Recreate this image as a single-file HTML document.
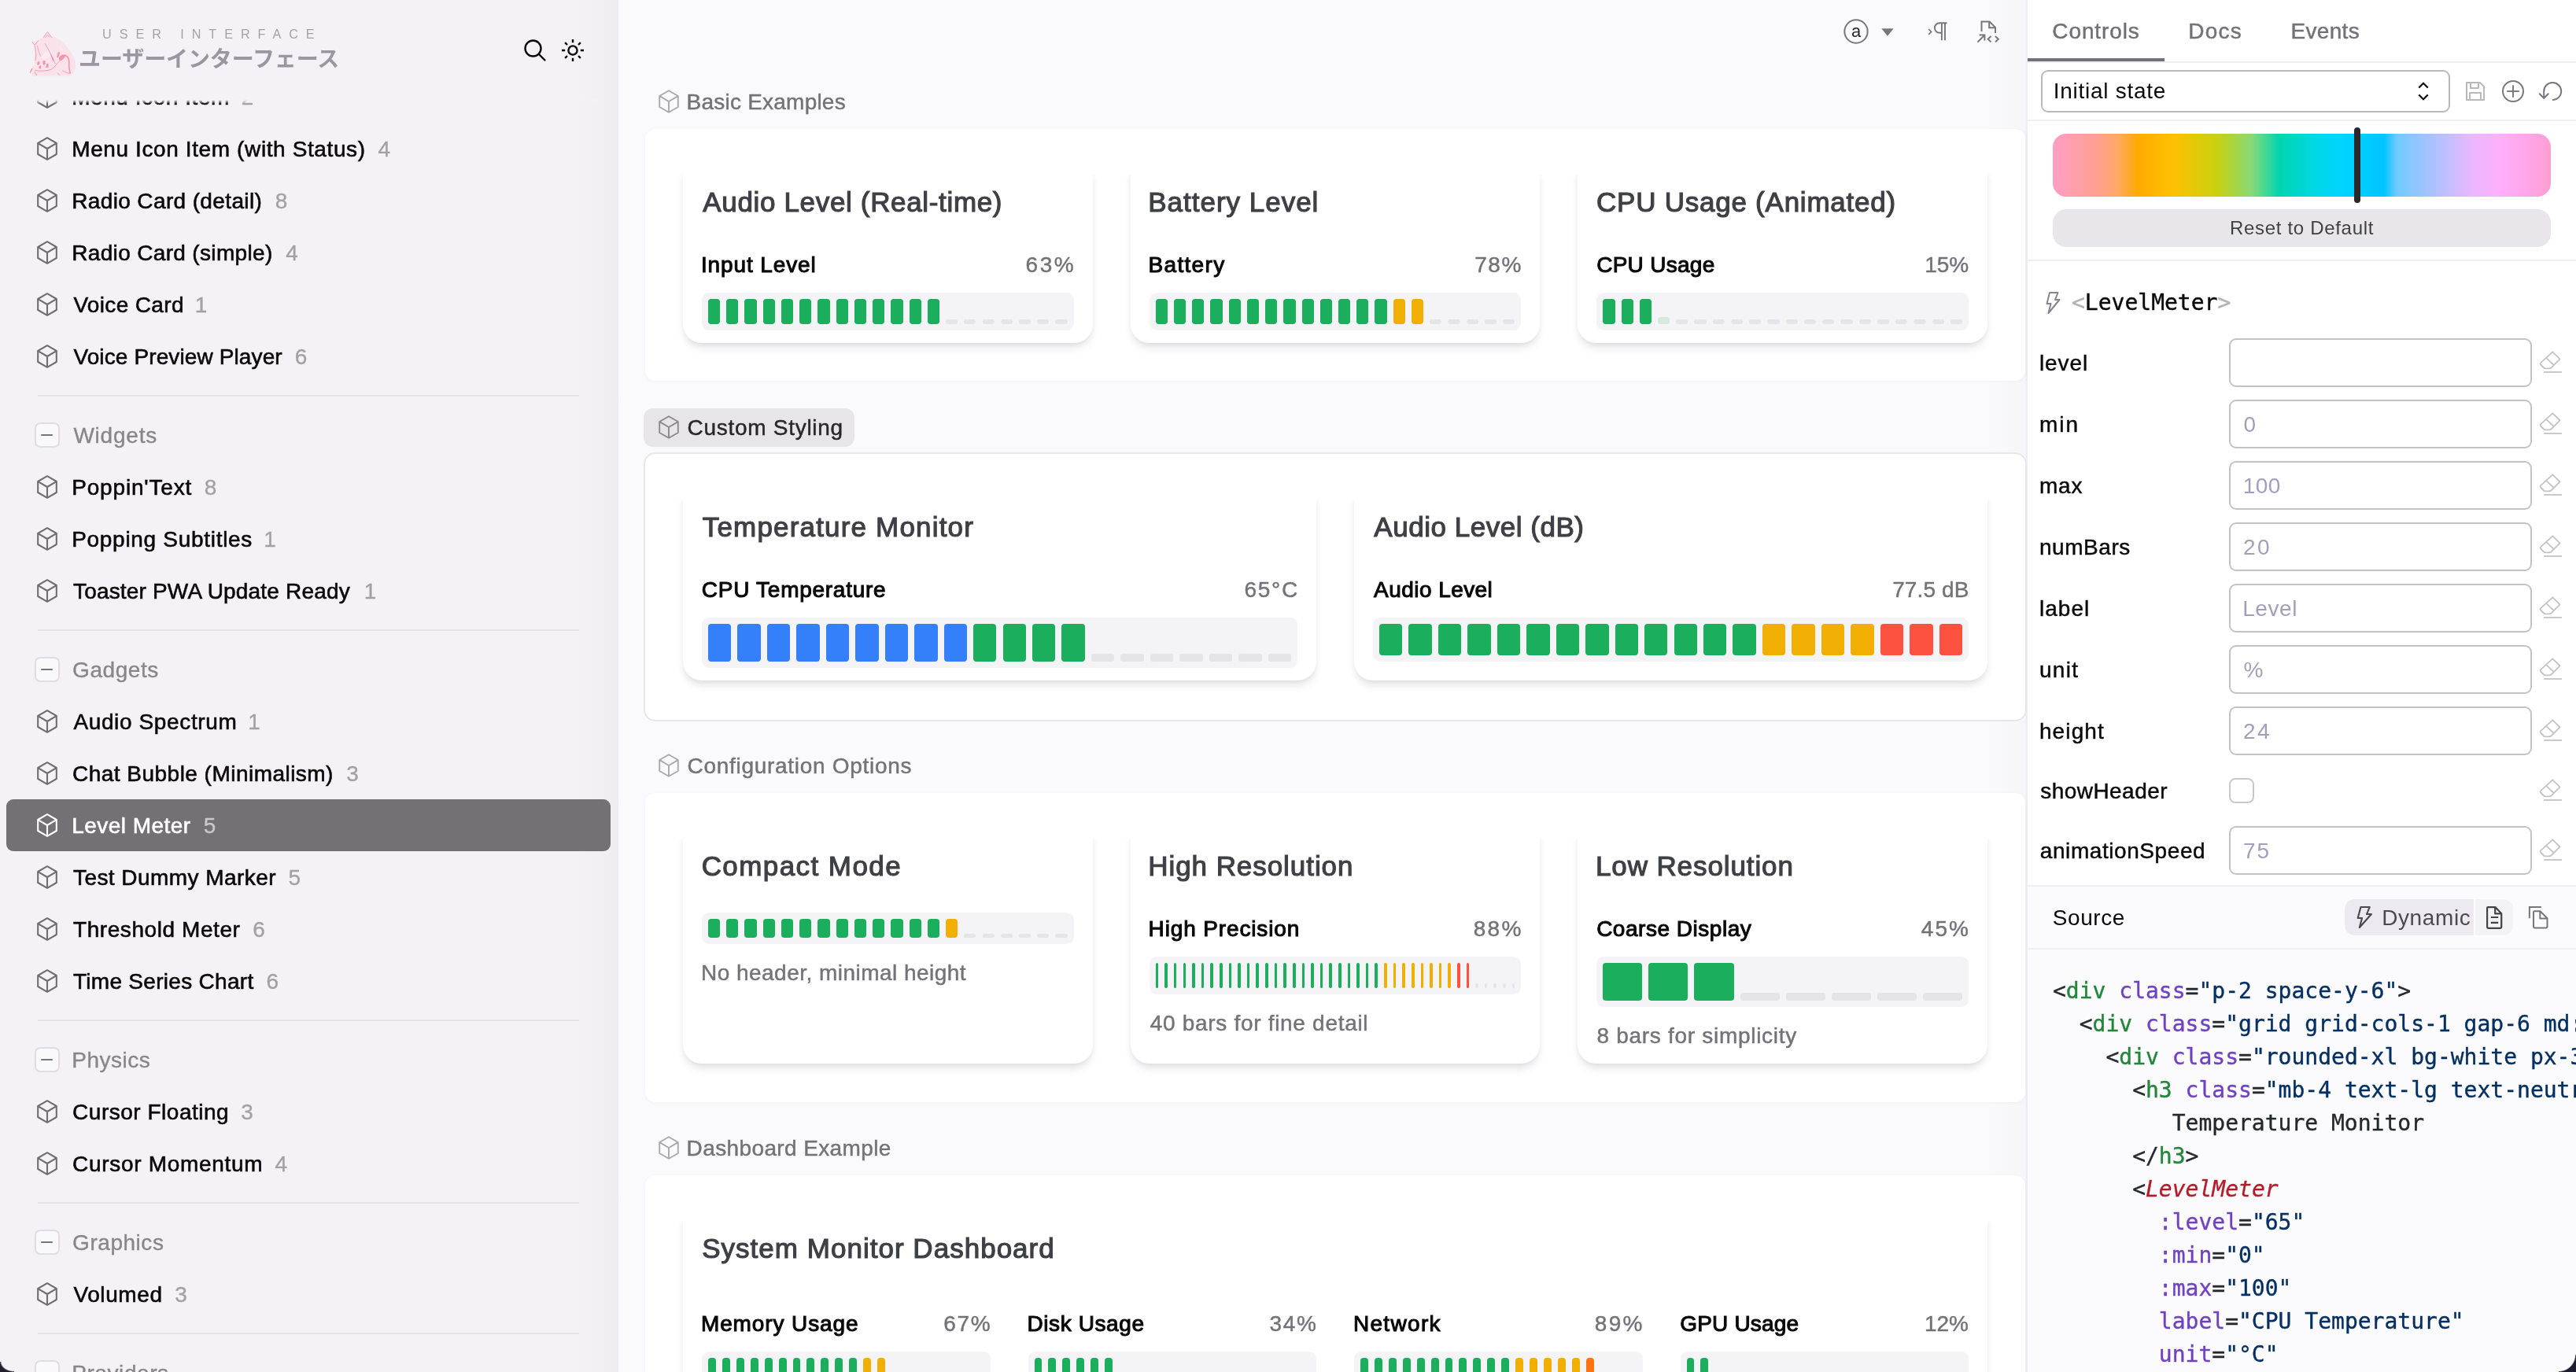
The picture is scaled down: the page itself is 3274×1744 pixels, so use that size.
<!DOCTYPE html>
<html lang="en"><head><meta charset="utf-8"><title>Level Meter</title>
<style>
*{box-sizing:border-box;margin:0;padding:0}
html,body{width:3274px;height:1744px;overflow:hidden;background:#faf9fb}
body{position:relative;font-family:"Liberation Sans","Noto Sans CJK JP",sans-serif;color:#0a0a0a;font-size:28px}
.ab{position:absolute}
svg{display:block;overflow:visible}
#side{position:absolute;left:0;top:0;width:786px;height:1744px;background:linear-gradient(90deg,#f4f2f7 0,#f4f2f7 736px,#f1eff4 770px,#efedf2 786px);overflow:hidden}
#main{position:absolute;left:786px;top:0;width:1791px;height:1744px;background:linear-gradient(90deg,#faf9fb 0,#faf9fb 1740px,#f6f5f8 1788px,#efedf1 1789px,#efedf1 1791px);overflow:hidden}
#panel{position:absolute;left:2577px;top:0;width:697px;height:1744px;background:#fff;overflow:hidden}
#side,#main,#panel{will-change:transform}
.it{position:absolute;left:8px;width:768px;height:66px;border-radius:9px;white-space:nowrap}
.it span{position:absolute;left:85.400px;top:1px;line-height:66px;font-size:28px;color:#0a0a0a;-webkit-text-stroke:.6px #0a0a0a}
.it b{position:absolute;top:1px;line-height:66px;font-size:28px;font-weight:400;color:#a1a1a6;-webkit-text-stroke:.35px #a1a1a6}
.it.sel{background:#737076}
.it.sel span{color:#fff;-webkit-text-stroke:.6px #fff}
.it.sel b{color:#c9c8cc;-webkit-text-stroke:.35px #c9c8cc}
.gh{position:absolute;left:8px;width:768px;height:66px;white-space:nowrap}
.gh span{position:absolute;left:85.400px;top:1px;line-height:66px;font-size:28px;color:#87868c;-webkit-text-stroke:.35px #87868c}
.gh u{position:absolute;left:35.500px;top:17px;width:32px;height:32px;border:2px solid #dfdde3;border-radius:7px;background:#f9f8fb}
.gh u:after{content:"";position:absolute;left:6.5px;top:13px;width:15px;height:2.2px;background:#77767c;border-radius:1px}
.sep{position:absolute;left:48px;width:688px;height:2px;background:#e6e4ea}
.sl{position:absolute;height:49px;border-radius:12px;white-space:nowrap;font-size:28px;line-height:49px;color:#737279;-webkit-text-stroke:.45px #737279}
.sl.on{background:#e7e5e9;color:#27272a;-webkit-text-stroke:.45px #27272a}
.sl span{position:absolute;left:56.800px;top:0}
.pn{position:absolute;left:34px;width:1754px;background:#fff;border-radius:13px;box-shadow:0 1px 5px rgba(40,30,60,.035)}
.pn.bd{box-shadow:0 0 0 2px #e8e6eb}
.cd{position:absolute;background:#fff;border-radius:0 0 24px 24px;clip-path:inset(10px -40px -40px -40px);box-shadow:0 8px 12px -2px rgba(30,20,50,.10),0 4px 8px -4px rgba(30,20,50,.10)}
.cd h3{position:absolute;left:25.300px;top:17px;font-size:35px;line-height:56px;font-weight:400;color:#3f3f46;white-space:nowrap;-webkit-text-stroke:1.15px #3f3f46}
.lb{position:absolute;font-size:28px;line-height:40px;color:#0a0a0a;white-space:nowrap;-webkit-text-stroke:1.05px #0a0a0a}
.vl{position:absolute;font-size:28px;line-height:40px;color:#737279;white-space:nowrap;text-align:right;-webkit-text-stroke:.45px #737279}
.nt{position:absolute;font-size:28px;line-height:40px;color:#737279;white-space:nowrap;-webkit-text-stroke:.45px #737279}
.mt{position:absolute;background:#f4f3f6;border-radius:9px}
.mt i{position:absolute;display:block}
.tab{position:absolute;top:1px;height:78px;line-height:78px;font-size:28px;color:#737279;white-space:nowrap;-webkit-text-stroke:.45px #737279}
.pl{position:absolute;left:16.700px;font-size:28px;line-height:60px;color:#0a0a0a;white-space:nowrap;-webkit-text-stroke:.45px #0a0a0a}
.in{position:absolute;left:256px;width:385px;height:62px;border:2px solid #c3c1ca;border-radius:9px;background:#fff;font-size:28px;line-height:59.500px;padding-left:17.400px;color:#a29fba;white-space:nowrap}
.mono{font-family:"DejaVu Sans Mono","Liberation Mono",monospace}
pre{position:absolute;left:32px;top:1239px;font-family:"DejaVu Sans Mono","Liberation Mono",monospace;font-size:28px;line-height:42px;color:#24292e;white-space:pre;-webkit-text-stroke:.35px currentColor}
pre .g{color:#22863a}pre .p{color:#6f42c1}pre .s{color:#032f62}pre .r{color:#b31d28;font-style:italic}
</style></head><body>

<div id="side">
<div class="it" style="top:90px"><svg class="ab" style="left:39.0px;top:18.0px" width="26" height="30" viewBox="0 0 26 30" fill="none" stroke="#6f6e75" stroke-width="2.1" stroke-linejoin="round" stroke-linecap="round"><path d="M13 1.2 L24.8 8 V22 L13 28.8 L1.2 22 V8 Z M1.4 8.1 L13 15 L24.6 8.1 M13 15 V28.6"/></svg><span style="letter-spacing:0.55px;margin-left:-2.19px;">Menu Icon Item</span><b style="left:300.0px;letter-spacing:0.00px;margin-left:-1.31px;">2</b></div>
<div class="it" style="top:156px"><svg class="ab" style="left:39.0px;top:18.0px" width="26" height="30" viewBox="0 0 26 30" fill="none" stroke="#6f6e75" stroke-width="2.1" stroke-linejoin="round" stroke-linecap="round"><path d="M13 1.2 L24.8 8 V22 L13 28.8 L1.2 22 V8 Z M1.4 8.1 L13 15 L24.6 8.1 M13 15 V28.6"/></svg><span style="letter-spacing:0.61px;margin-left:-2.19px;">Menu Icon Item (with Status)</span><b style="left:473.0px;letter-spacing:0.00px;margin-left:-0.44px;">4</b></div>
<div class="it" style="top:222px"><svg class="ab" style="left:39.0px;top:18.0px" width="26" height="30" viewBox="0 0 26 30" fill="none" stroke="#6f6e75" stroke-width="2.1" stroke-linejoin="round" stroke-linecap="round"><path d="M13 1.2 L24.8 8 V22 L13 28.8 L1.2 22 V8 Z M1.4 8.1 L13 15 L24.6 8.1 M13 15 V28.6"/></svg><span style="letter-spacing:0.37px;margin-left:-2.19px;">Radio Card (detail)</span><b style="left:342.6px;letter-spacing:0.00px;margin-left:-0.88px;">8</b></div>
<div class="it" style="top:288px"><svg class="ab" style="left:39.0px;top:18.0px" width="26" height="30" viewBox="0 0 26 30" fill="none" stroke="#6f6e75" stroke-width="2.1" stroke-linejoin="round" stroke-linecap="round"><path d="M13 1.2 L24.8 8 V22 L13 28.8 L1.2 22 V8 Z M1.4 8.1 L13 15 L24.6 8.1 M13 15 V28.6"/></svg><span style="letter-spacing:0.34px;margin-left:-2.19px;">Radio Card (simple)</span><b style="left:355.7px;letter-spacing:0.00px;margin-left:-0.44px;">4</b></div>
<div class="it" style="top:354px"><svg class="ab" style="left:39.0px;top:18.0px" width="26" height="30" viewBox="0 0 26 30" fill="none" stroke="#6f6e75" stroke-width="2.1" stroke-linejoin="round" stroke-linecap="round"><path d="M13 1.2 L24.8 8 V22 L13 28.8 L1.2 22 V8 Z M1.4 8.1 L13 15 L24.6 8.1 M13 15 V28.6"/></svg><span style="letter-spacing:0.35px;margin-left:0.00px;">Voice Card</span><b style="left:241.6px;letter-spacing:0.00px;margin-left:-1.75px;">1</b></div>
<div class="it" style="top:420px"><svg class="ab" style="left:39.0px;top:18.0px" width="26" height="30" viewBox="0 0 26 30" fill="none" stroke="#6f6e75" stroke-width="2.1" stroke-linejoin="round" stroke-linecap="round"><path d="M13 1.2 L24.8 8 V22 L13 28.8 L1.2 22 V8 Z M1.4 8.1 L13 15 L24.6 8.1 M13 15 V28.6"/></svg><span style="letter-spacing:0.12px;margin-left:0.00px;">Voice Preview Player</span><b style="left:368.0px;letter-spacing:0.00px;margin-left:-1.31px;">6</b></div>
<div class="sep" style="top:502px"></div>
<div class="gh" style="top:520px"><u></u><span style="letter-spacing:0.79px;margin-left:0.00px;">Widgets</span></div>
<div class="it" style="top:586px"><svg class="ab" style="left:39.0px;top:18.0px" width="26" height="30" viewBox="0 0 26 30" fill="none" stroke="#6f6e75" stroke-width="2.1" stroke-linejoin="round" stroke-linecap="round"><path d="M13 1.2 L24.8 8 V22 L13 28.8 L1.2 22 V8 Z M1.4 8.1 L13 15 L24.6 8.1 M13 15 V28.6"/></svg><span style="letter-spacing:0.83px;margin-left:-2.19px;">Poppin&#x27;Text</span><b style="left:252.6px;letter-spacing:0.00px;margin-left:-0.88px;">8</b></div>
<div class="it" style="top:652px"><svg class="ab" style="left:39.0px;top:18.0px" width="26" height="30" viewBox="0 0 26 30" fill="none" stroke="#6f6e75" stroke-width="2.1" stroke-linejoin="round" stroke-linecap="round"><path d="M13 1.2 L24.8 8 V22 L13 28.8 L1.2 22 V8 Z M1.4 8.1 L13 15 L24.6 8.1 M13 15 V28.6"/></svg><span style="letter-spacing:0.70px;margin-left:-2.19px;">Popping Subtitles</span><b style="left:329.0px;letter-spacing:0.00px;margin-left:-1.75px;">1</b></div>
<div class="it" style="top:718px"><svg class="ab" style="left:39.0px;top:18.0px" width="26" height="30" viewBox="0 0 26 30" fill="none" stroke="#6f6e75" stroke-width="2.1" stroke-linejoin="round" stroke-linecap="round"><path d="M13 1.2 L24.8 8 V22 L13 28.8 L1.2 22 V8 Z M1.4 8.1 L13 15 L24.6 8.1 M13 15 V28.6"/></svg><span style="letter-spacing:0.18px;margin-left:-0.44px;">Toaster PWA Update Ready</span><b style="left:456.6px;letter-spacing:0.00px;margin-left:-1.75px;">1</b></div>
<div class="sep" style="top:800px"></div>
<div class="gh" style="top:818px"><u></u><span style="letter-spacing:0.57px;margin-left:-1.31px;">Gadgets</span></div>
<div class="it" style="top:884px"><svg class="ab" style="left:39.0px;top:18.0px" width="26" height="30" viewBox="0 0 26 30" fill="none" stroke="#6f6e75" stroke-width="2.1" stroke-linejoin="round" stroke-linecap="round"><path d="M13 1.2 L24.8 8 V22 L13 28.8 L1.2 22 V8 Z M1.4 8.1 L13 15 L24.6 8.1 M13 15 V28.6"/></svg><span style="letter-spacing:0.63px;margin-left:0.00px;">Audio Spectrum</span><b style="left:309.0px;letter-spacing:0.00px;margin-left:-1.75px;">1</b></div>
<div class="it" style="top:950px"><svg class="ab" style="left:39.0px;top:18.0px" width="26" height="30" viewBox="0 0 26 30" fill="none" stroke="#6f6e75" stroke-width="2.1" stroke-linejoin="round" stroke-linecap="round"><path d="M13 1.2 L24.8 8 V22 L13 28.8 L1.2 22 V8 Z M1.4 8.1 L13 15 L24.6 8.1 M13 15 V28.6"/></svg><span style="letter-spacing:0.47px;margin-left:-1.31px;">Chat Bubble (Minimalism)</span><b style="left:433.0px;letter-spacing:0.00px;margin-left:-0.88px;">3</b></div>
<div class="it sel" style="top:1016px"><svg class="ab" style="left:39.0px;top:18.0px" width="26" height="30" viewBox="0 0 26 30" fill="none" stroke="#ffffff" stroke-width="2.1" stroke-linejoin="round" stroke-linecap="round"><path d="M13 1.2 L24.8 8 V22 L13 28.8 L1.2 22 V8 Z M1.4 8.1 L13 15 L24.6 8.1 M13 15 V28.6"/></svg><span style="letter-spacing:0.47px;margin-left:-2.19px;">Level Meter</span><b style="left:251.5px;letter-spacing:0.00px;margin-left:-0.88px;">5</b></div>
<div class="it" style="top:1082px"><svg class="ab" style="left:39.0px;top:18.0px" width="26" height="30" viewBox="0 0 26 30" fill="none" stroke="#6f6e75" stroke-width="2.1" stroke-linejoin="round" stroke-linecap="round"><path d="M13 1.2 L24.8 8 V22 L13 28.8 L1.2 22 V8 Z M1.4 8.1 L13 15 L24.6 8.1 M13 15 V28.6"/></svg><span style="letter-spacing:0.44px;margin-left:-0.44px;">Test Dummy Marker</span><b style="left:359.3px;letter-spacing:0.00px;margin-left:-0.88px;">5</b></div>
<div class="it" style="top:1148px"><svg class="ab" style="left:39.0px;top:18.0px" width="26" height="30" viewBox="0 0 26 30" fill="none" stroke="#6f6e75" stroke-width="2.1" stroke-linejoin="round" stroke-linecap="round"><path d="M13 1.2 L24.8 8 V22 L13 28.8 L1.2 22 V8 Z M1.4 8.1 L13 15 L24.6 8.1 M13 15 V28.6"/></svg><span style="letter-spacing:0.58px;margin-left:-0.44px;">Threshold Meter</span><b style="left:314.5px;letter-spacing:0.00px;margin-left:-1.31px;">6</b></div>
<div class="it" style="top:1214px"><svg class="ab" style="left:39.0px;top:18.0px" width="26" height="30" viewBox="0 0 26 30" fill="none" stroke="#6f6e75" stroke-width="2.1" stroke-linejoin="round" stroke-linecap="round"><path d="M13 1.2 L24.8 8 V22 L13 28.8 L1.2 22 V8 Z M1.4 8.1 L13 15 L24.6 8.1 M13 15 V28.6"/></svg><span style="letter-spacing:0.29px;margin-left:-0.44px;">Time Series Chart</span><b style="left:331.7px;letter-spacing:0.00px;margin-left:-1.31px;">6</b></div>
<div class="sep" style="top:1296px"></div>
<div class="gh" style="top:1314px"><u></u><span style="letter-spacing:0.53px;margin-left:-2.19px;">Physics</span></div>
<div class="it" style="top:1380px"><svg class="ab" style="left:39.0px;top:18.0px" width="26" height="30" viewBox="0 0 26 30" fill="none" stroke="#6f6e75" stroke-width="2.1" stroke-linejoin="round" stroke-linecap="round"><path d="M13 1.2 L24.8 8 V22 L13 28.8 L1.2 22 V8 Z M1.4 8.1 L13 15 L24.6 8.1 M13 15 V28.6"/></svg><span style="letter-spacing:0.51px;margin-left:-1.31px;">Cursor Floating</span><b style="left:299.2px;letter-spacing:0.00px;margin-left:-0.88px;">3</b></div>
<div class="it" style="top:1446px"><svg class="ab" style="left:39.0px;top:18.0px" width="26" height="30" viewBox="0 0 26 30" fill="none" stroke="#6f6e75" stroke-width="2.1" stroke-linejoin="round" stroke-linecap="round"><path d="M13 1.2 L24.8 8 V22 L13 28.8 L1.2 22 V8 Z M1.4 8.1 L13 15 L24.6 8.1 M13 15 V28.6"/></svg><span style="letter-spacing:0.69px;margin-left:-1.31px;">Cursor Momentum</span><b style="left:342.0px;letter-spacing:0.00px;margin-left:-0.44px;">4</b></div>
<div class="sep" style="top:1528px"></div>
<div class="gh" style="top:1546px"><u></u><span style="letter-spacing:0.54px;margin-left:-1.31px;">Graphics</span></div>
<div class="it" style="top:1612px"><svg class="ab" style="left:39.0px;top:18.0px" width="26" height="30" viewBox="0 0 26 30" fill="none" stroke="#6f6e75" stroke-width="2.1" stroke-linejoin="round" stroke-linecap="round"><path d="M13 1.2 L24.8 8 V22 L13 28.8 L1.2 22 V8 Z M1.4 8.1 L13 15 L24.6 8.1 M13 15 V28.6"/></svg><span style="letter-spacing:0.62px;margin-left:0.00px;">Volumed</span><b style="left:215.0px;letter-spacing:0.00px;margin-left:-0.88px;">3</b></div>
<div class="sep" style="top:1694px"></div>
<div class="gh" style="top:1712px"><u></u><span style="letter-spacing:0.58px;margin-left:-2.19px;">Providers</span></div>
<div class="ab" style="left:0;top:0;width:786px;height:127px;background:linear-gradient(90deg,#f4f2f7 0,#f4f2f7 736px,#f1eff4 770px,#efedf2 786px)"></div>
<div class="ab" style="left:0;top:127px;width:760px;height:5px;background:linear-gradient(180deg,#f4f2f7,rgba(244,242,247,0))"></div>
<svg class="ab" style="left:30px;top:30px" width="80" height="80" viewBox="0 0 1372 1372">
<path d="M520 175 L620 290 C760 300 860 400 950 520 C1060 640 1130 760 1140 900 C1150 1000 1080 1100 1020 1135 L300 1135 C220 1180 170 1150 190 1080 C120 1050 170 960 240 900 C230 760 250 600 235 480 L180 395 L300 400 C330 350 380 310 430 295 Z" fill="#f9e2ea"/>
<ellipse cx="500" cy="690" rx="120" ry="60" fill="#fdf3f6" opacity=".6" transform="rotate(-40 500 690)"/>
<g fill="none" stroke="#f392ad" stroke-linecap="round" stroke-linejoin="round">
<path d="M430 300 L520 182 L610 300 M470 300 L520 250 L560 295" stroke-width="16"/>
<path d="M188 398 L242 470 L318 372" stroke-width="16"/>
<path d="M238 480 C270 600 285 700 255 800" stroke-width="15"/>
<path d="M300 485 C320 580 340 650 372 708" stroke-width="14"/>
<path d="M467 432 C540 560 620 720 690 868" stroke-width="14"/>
<path d="M850 1028 L975 1085 L1010 1075" stroke-width="14"/>
<path d="M742 1078 L785 1124 M242 1052 L284 1124" stroke-width="16"/>
<path d="M905 690 C980 720 1000 800 990 900 C985 980 1010 1030 1012 1080" stroke-width="26"/>
<path d="M790 810 C720 880 670 960 600 1003 C500 1030 400 1030 330 1032 C300 1025 270 1015 250 1020" stroke-width="15"/>
</g>
<path d="M143 1062 L185 982" fill="none" stroke="#f28a8e" stroke-width="20" stroke-linecap="round"/>
<g fill="#f392ad">
<path d="M560 600 L660 780 L640 830 L610 740 Z"/>
<path d="M755 615 L795 630 L752 745 L722 735 Z"/>
<path d="M770 760 C780 690 860 660 920 690 C900 740 850 800 800 810 C780 800 768 785 770 760 Z"/>
<path d="M300 835 L350 825 L345 895 L295 900 Z M415 815 L475 808 L470 890 L425 905 Z M335 925 L385 915 L375 985 L335 980 Z M505 870 L540 875 L545 950 L480 960 Z"/>
</g>
<path d="M812 520 L822 560 L850 578" fill="none" stroke="#fdf6f8" stroke-width="12" stroke-linecap="round"/>
</svg>
<div class="ab" style="left:130px;top:31px;font-size:16.200px;line-height:24px;letter-spacing:9.950px;color:#a4a2a9;white-space:nowrap">USER INTERFACE</div>
<div class="ab" style="left:100px;top:53px;font-size:28px;line-height:40px;font-weight:700;letter-spacing:-.1px;color:#9a97a1;white-space:nowrap;font-family:'Noto Sans CJK JP','Liberation Sans',sans-serif">ユーザーインターフェース</div>
<svg class="ab" style="left:664px;top:48px" width="32" height="32" viewBox="0 0 32 32" fill="none" stroke="#0a0a0a" stroke-width="2.4" stroke-linecap="round"><circle cx="13.5" cy="13.5" r="10"/><path d="M21 21 L28.5 28.5"/></svg>
<svg class="ab" style="left:712px;top:48px" width="32" height="32" viewBox="0 0 32 32" fill="none" stroke="#0a0a0a" stroke-width="2.4" stroke-linecap="butt"><circle cx="16" cy="16" r="5.6"/><path d="M16 2v4.2M16 25.8V30M2 16h4.2M25.8 16H30M6.1 6.1l2.9 2.9M23 23l2.9 2.9M6.1 25.9L9 23M23 9l2.9-2.9"/></svg>

</div>
<div id="main">
<svg class="ab" style="left:1557px;top:24px" width="32" height="32" viewBox="0 0 32 32"><circle cx="16" cy="16" r="14.7" fill="none" stroke="#77767c" stroke-width="2"/><text x="16" y="23.300" text-anchor="middle" fill="#27272a" style="font:22px 'Liberation Sans',sans-serif">a</text></svg>
<svg class="ab" style="left:1605px;top:36px" width="16" height="10" viewBox="0 0 16 10"><path d="M0.3 0.2H15.7L8 9.8Z" fill="#77767c"/></svg>
<svg class="ab" style="left:1663px;top:26px" width="28" height="28" viewBox="0 0 28 28" fill="none" stroke="#77767c" stroke-width="1.9"><path d="M2.2 11l3.4 3.4-3.4 3.4" stroke-width="1.7"/><path d="M25.5 3.2H16.2a6.3 6.3 0 0 0 0 12.6h2.6M18.9 3.2v22M23 3.2v22"/></svg>
<svg class="ab" style="left:1725px;top:25px" width="32" height="30" viewBox="0 0 32 30" fill="none" stroke="#77767c" stroke-width="2"><path d="M7.5 15V2.5h10.2l7.3 7.3V17M17.2 2.5v7.8h7.8"/><path d="M2.5 28.5l8.6-8.6M4.6 19.600h6.8v6.8"/><path d="M19.500 21l-3.800 3.700 3.800 3.700M25 21l3.800 3.700L25 28.400"/></svg>

<div class="sl" style="left:32px;top:104.5px;width:270px"><svg class="ab" style="left:19.0px;top:9.5px" width="26" height="30" viewBox="0 0 26 30" fill="none" stroke="#a9a8ad" stroke-width="1.9" stroke-linejoin="round" stroke-linecap="round"><path d="M13 1.2 L24.8 8 V22 L13 28.8 L1.2 22 V8 Z M1.4 8.1 L13 15 L24.6 8.1 M13 15 V28.6"/></svg><span style="letter-spacing:0.22px;margin-left:-2.19px;">Basic Examples</span></div>
<div class="pn" style="top:164px;height:320px"></div>
<div class="cd" style="left:82.0px;top:212px;width:520.67px;height:224px"><h3 style="letter-spacing:0.66px;margin-left:0.00px;">Audio Level (Real-time)</h3></div>
<div class="lb" style="left:107.10px;top:316.5px;letter-spacing:0.88px;margin-left:-2.19px;">Input Level</div>
<div class="vl" style="left:377.87px;width:200px;top:317px"><span style="display:inline-block;letter-spacing:2.55px;margin-right:-3.39px;">63%</span></div>
<div class="mt" style="left:106.0px;top:372px;width:472.67px;height:48px"><i style="left:8.00px;top:8px;width:15.23px;height:32px;background:#1bae5c;border-radius:4.0px"></i><i style="left:31.23px;top:8px;width:15.23px;height:32px;background:#1bae5c;border-radius:4.0px"></i><i style="left:54.47px;top:8px;width:15.23px;height:32px;background:#1bae5c;border-radius:4.0px"></i><i style="left:77.70px;top:8px;width:15.23px;height:32px;background:#1bae5c;border-radius:4.0px"></i><i style="left:100.93px;top:8px;width:15.23px;height:32px;background:#1bae5c;border-radius:4.0px"></i><i style="left:124.17px;top:8px;width:15.23px;height:32px;background:#1bae5c;border-radius:4.0px"></i><i style="left:147.40px;top:8px;width:15.23px;height:32px;background:#1bae5c;border-radius:4.0px"></i><i style="left:170.63px;top:8px;width:15.23px;height:32px;background:#1bae5c;border-radius:4.0px"></i><i style="left:193.87px;top:8px;width:15.23px;height:32px;background:#1bae5c;border-radius:4.0px"></i><i style="left:217.10px;top:8px;width:15.23px;height:32px;background:#1bae5c;border-radius:4.0px"></i><i style="left:240.33px;top:8px;width:15.23px;height:32px;background:#1bae5c;border-radius:4.0px"></i><i style="left:263.57px;top:8px;width:15.23px;height:32px;background:#1bae5c;border-radius:4.0px"></i><i style="left:286.80px;top:8px;width:15.23px;height:32px;background:#1bae5c;border-radius:4.0px"></i><i style="left:310.04px;top:33.6px;width:15.23px;height:6.4px;background:#e5e4e8;border-radius:3.0px"></i><i style="left:333.27px;top:33.6px;width:15.23px;height:6.4px;background:#e5e4e8;border-radius:3.0px"></i><i style="left:356.50px;top:33.6px;width:15.23px;height:6.4px;background:#e5e4e8;border-radius:3.0px"></i><i style="left:379.74px;top:33.6px;width:15.23px;height:6.4px;background:#e5e4e8;border-radius:3.0px"></i><i style="left:402.97px;top:33.6px;width:15.23px;height:6.4px;background:#e5e4e8;border-radius:3.0px"></i><i style="left:426.20px;top:33.6px;width:15.23px;height:6.4px;background:#e5e4e8;border-radius:3.0px"></i><i style="left:449.44px;top:33.6px;width:15.23px;height:6.4px;background:#e5e4e8;border-radius:3.0px"></i></div>
<div class="cd" style="left:650.6700000000001px;top:212px;width:520.67px;height:224px"><h3 style="letter-spacing:0.99px;margin-left:-2.73px;">Battery Level</h3></div>
<div class="lb" style="left:675.77px;top:316.5px;letter-spacing:1.31px;margin-left:-2.19px;">Battery</div>
<div class="vl" style="left:946.54px;width:200px;top:317px"><span style="display:inline-block;letter-spacing:1.55px;margin-right:-2.39px;">78%</span></div>
<div class="mt" style="left:674.6700000000001px;top:372px;width:472.67px;height:48px"><i style="left:8.00px;top:8px;width:15.23px;height:32px;background:#1bae5c;border-radius:4.0px"></i><i style="left:31.23px;top:8px;width:15.23px;height:32px;background:#1bae5c;border-radius:4.0px"></i><i style="left:54.47px;top:8px;width:15.23px;height:32px;background:#1bae5c;border-radius:4.0px"></i><i style="left:77.70px;top:8px;width:15.23px;height:32px;background:#1bae5c;border-radius:4.0px"></i><i style="left:100.93px;top:8px;width:15.23px;height:32px;background:#1bae5c;border-radius:4.0px"></i><i style="left:124.17px;top:8px;width:15.23px;height:32px;background:#1bae5c;border-radius:4.0px"></i><i style="left:147.40px;top:8px;width:15.23px;height:32px;background:#1bae5c;border-radius:4.0px"></i><i style="left:170.63px;top:8px;width:15.23px;height:32px;background:#1bae5c;border-radius:4.0px"></i><i style="left:193.87px;top:8px;width:15.23px;height:32px;background:#1bae5c;border-radius:4.0px"></i><i style="left:217.10px;top:8px;width:15.23px;height:32px;background:#1bae5c;border-radius:4.0px"></i><i style="left:240.33px;top:8px;width:15.23px;height:32px;background:#1bae5c;border-radius:4.0px"></i><i style="left:263.57px;top:8px;width:15.23px;height:32px;background:#1bae5c;border-radius:4.0px"></i><i style="left:286.80px;top:8px;width:15.23px;height:32px;background:#1bae5c;border-radius:4.0px"></i><i style="left:310.04px;top:8px;width:15.23px;height:32px;background:#f1af03;border-radius:4.0px"></i><i style="left:333.27px;top:8px;width:15.23px;height:32px;background:#f1af03;border-radius:4.0px"></i><i style="left:356.50px;top:33.6px;width:15.23px;height:6.4px;background:#e5e4e8;border-radius:3.0px"></i><i style="left:379.74px;top:33.6px;width:15.23px;height:6.4px;background:#e5e4e8;border-radius:3.0px"></i><i style="left:402.97px;top:33.6px;width:15.23px;height:6.4px;background:#e5e4e8;border-radius:3.0px"></i><i style="left:426.20px;top:33.6px;width:15.23px;height:6.4px;background:#e5e4e8;border-radius:3.0px"></i><i style="left:449.44px;top:33.6px;width:15.23px;height:6.4px;background:#e5e4e8;border-radius:3.0px"></i></div>
<div class="cd" style="left:1219.34px;top:212px;width:520.67px;height:224px"><h3 style="letter-spacing:0.76px;margin-left:-1.64px;">CPU Usage (Animated)</h3></div>
<div class="lb" style="left:1244.44px;top:316.5px;letter-spacing:0.28px;margin-left:-1.31px;">CPU Usage</div>
<div class="vl" style="left:1515.21px;width:200px;top:317px"><span style="display:inline-block;letter-spacing:-0.13px;margin-right:-0.71px;">15%</span></div>
<div class="mt" style="left:1243.34px;top:372px;width:472.67px;height:48px"><i style="left:8.00px;top:8px;width:15.23px;height:32px;background:#1bae5c;border-radius:4.0px"></i><i style="left:31.23px;top:8px;width:15.23px;height:32px;background:#1bae5c;border-radius:4.0px"></i><i style="left:54.47px;top:8px;width:15.23px;height:32px;background:#1bae5c;border-radius:4.0px"></i><i style="left:77.70px;top:31px;width:15.23px;height:9px;background:#d6e9de;border-radius:3.0px"></i><i style="left:100.93px;top:33.6px;width:15.23px;height:6.4px;background:#e5e4e8;border-radius:3.0px"></i><i style="left:124.17px;top:33.6px;width:15.23px;height:6.4px;background:#e5e4e8;border-radius:3.0px"></i><i style="left:147.40px;top:33.6px;width:15.23px;height:6.4px;background:#e5e4e8;border-radius:3.0px"></i><i style="left:170.63px;top:33.6px;width:15.23px;height:6.4px;background:#e5e4e8;border-radius:3.0px"></i><i style="left:193.87px;top:33.6px;width:15.23px;height:6.4px;background:#e5e4e8;border-radius:3.0px"></i><i style="left:217.10px;top:33.6px;width:15.23px;height:6.4px;background:#e5e4e8;border-radius:3.0px"></i><i style="left:240.33px;top:33.6px;width:15.23px;height:6.4px;background:#e5e4e8;border-radius:3.0px"></i><i style="left:263.57px;top:33.6px;width:15.23px;height:6.4px;background:#e5e4e8;border-radius:3.0px"></i><i style="left:286.80px;top:33.6px;width:15.23px;height:6.4px;background:#e5e4e8;border-radius:3.0px"></i><i style="left:310.04px;top:33.6px;width:15.23px;height:6.4px;background:#e5e4e8;border-radius:3.0px"></i><i style="left:333.27px;top:33.6px;width:15.23px;height:6.4px;background:#e5e4e8;border-radius:3.0px"></i><i style="left:356.50px;top:33.6px;width:15.23px;height:6.4px;background:#e5e4e8;border-radius:3.0px"></i><i style="left:379.74px;top:33.6px;width:15.23px;height:6.4px;background:#e5e4e8;border-radius:3.0px"></i><i style="left:402.97px;top:33.6px;width:15.23px;height:6.4px;background:#e5e4e8;border-radius:3.0px"></i><i style="left:426.20px;top:33.6px;width:15.23px;height:6.4px;background:#e5e4e8;border-radius:3.0px"></i><i style="left:449.44px;top:33.6px;width:15.23px;height:6.4px;background:#e5e4e8;border-radius:3.0px"></i></div>
<div class="sl on" style="left:32px;top:518.5px;width:268px"><svg class="ab" style="left:19.0px;top:9.5px" width="26" height="30" viewBox="0 0 26 30" fill="none" stroke="#8a898f" stroke-width="1.9" stroke-linejoin="round" stroke-linecap="round"><path d="M13 1.2 L24.8 8 V22 L13 28.8 L1.2 22 V8 Z M1.4 8.1 L13 15 L24.6 8.1 M13 15 V28.6"/></svg><span style="letter-spacing:0.72px;margin-left:-1.31px;">Custom Styling</span></div>
<div class="pn bd" style="top:577px;height:338px"></div>
<div class="cd" style="left:82px;top:625px;width:805px;height:240px"><h3 style="letter-spacing:1.18px;margin-left:-0.55px;">Temperature Monitor</h3></div>
<div class="lb" style="left:107.10px;top:729.5px;letter-spacing:0.73px;margin-left:-1.31px;">CPU Temperature</div>
<div class="vl" style="left:662.20px;width:200px;top:730px"><span style="display:inline-block;letter-spacing:1.71px;margin-right:-2.68px;">65°C</span></div>
<div class="mt" style="left:106px;top:785px;width:757px;height:64px"><i style="left:8.00px;top:8px;width:29.45px;height:48px;background:#347ffa;border-radius:4.0px"></i><i style="left:45.45px;top:8px;width:29.45px;height:48px;background:#347ffa;border-radius:4.0px"></i><i style="left:82.90px;top:8px;width:29.45px;height:48px;background:#347ffa;border-radius:4.0px"></i><i style="left:120.35px;top:8px;width:29.45px;height:48px;background:#347ffa;border-radius:4.0px"></i><i style="left:157.80px;top:8px;width:29.45px;height:48px;background:#347ffa;border-radius:4.0px"></i><i style="left:195.25px;top:8px;width:29.45px;height:48px;background:#347ffa;border-radius:4.0px"></i><i style="left:232.70px;top:8px;width:29.45px;height:48px;background:#347ffa;border-radius:4.0px"></i><i style="left:270.15px;top:8px;width:29.45px;height:48px;background:#347ffa;border-radius:4.0px"></i><i style="left:307.60px;top:8px;width:29.45px;height:48px;background:#347ffa;border-radius:4.0px"></i><i style="left:345.05px;top:8px;width:29.45px;height:48px;background:#1bae5c;border-radius:4.0px"></i><i style="left:382.50px;top:8px;width:29.45px;height:48px;background:#1bae5c;border-radius:4.0px"></i><i style="left:419.95px;top:8px;width:29.45px;height:48px;background:#1bae5c;border-radius:4.0px"></i><i style="left:457.40px;top:8px;width:29.45px;height:48px;background:#1bae5c;border-radius:4.0px"></i><i style="left:494.85px;top:46.4px;width:29.45px;height:9.6px;background:#e5e4e8;border-radius:3.0px"></i><i style="left:532.30px;top:46.4px;width:29.45px;height:9.6px;background:#e5e4e8;border-radius:3.0px"></i><i style="left:569.75px;top:46.4px;width:29.45px;height:9.6px;background:#e5e4e8;border-radius:3.0px"></i><i style="left:607.20px;top:46.4px;width:29.45px;height:9.6px;background:#e5e4e8;border-radius:3.0px"></i><i style="left:644.65px;top:46.4px;width:29.45px;height:9.6px;background:#e5e4e8;border-radius:3.0px"></i><i style="left:682.10px;top:46.4px;width:29.45px;height:9.6px;background:#e5e4e8;border-radius:3.0px"></i><i style="left:719.55px;top:46.4px;width:29.45px;height:9.6px;background:#e5e4e8;border-radius:3.0px"></i></div>
<div class="cd" style="left:935px;top:625px;width:805px;height:240px"><h3 style="letter-spacing:0.53px;margin-left:0.00px;">Audio Level (dB)</h3></div>
<div class="lb" style="left:960.10px;top:729.5px;letter-spacing:0.44px;margin-left:0.00px;">Audio Level</div>
<div class="vl" style="left:1515.20px;width:200px;top:730px"><span style="display:inline-block;letter-spacing:0.11px;margin-right:-1.29px;">77.5 dB</span></div>
<div class="mt" style="left:959px;top:785px;width:757px;height:56px"><i style="left:8.00px;top:8px;width:29.45px;height:40px;background:#1bae5c;border-radius:4.0px"></i><i style="left:45.45px;top:8px;width:29.45px;height:40px;background:#1bae5c;border-radius:4.0px"></i><i style="left:82.90px;top:8px;width:29.45px;height:40px;background:#1bae5c;border-radius:4.0px"></i><i style="left:120.35px;top:8px;width:29.45px;height:40px;background:#1bae5c;border-radius:4.0px"></i><i style="left:157.80px;top:8px;width:29.45px;height:40px;background:#1bae5c;border-radius:4.0px"></i><i style="left:195.25px;top:8px;width:29.45px;height:40px;background:#1bae5c;border-radius:4.0px"></i><i style="left:232.70px;top:8px;width:29.45px;height:40px;background:#1bae5c;border-radius:4.0px"></i><i style="left:270.15px;top:8px;width:29.45px;height:40px;background:#1bae5c;border-radius:4.0px"></i><i style="left:307.60px;top:8px;width:29.45px;height:40px;background:#1bae5c;border-radius:4.0px"></i><i style="left:345.05px;top:8px;width:29.45px;height:40px;background:#1bae5c;border-radius:4.0px"></i><i style="left:382.50px;top:8px;width:29.45px;height:40px;background:#1bae5c;border-radius:4.0px"></i><i style="left:419.95px;top:8px;width:29.45px;height:40px;background:#1bae5c;border-radius:4.0px"></i><i style="left:457.40px;top:8px;width:29.45px;height:40px;background:#1bae5c;border-radius:4.0px"></i><i style="left:494.85px;top:8px;width:29.45px;height:40px;background:#f1af03;border-radius:4.0px"></i><i style="left:532.30px;top:8px;width:29.45px;height:40px;background:#f1af03;border-radius:4.0px"></i><i style="left:569.75px;top:8px;width:29.45px;height:40px;background:#f1af03;border-radius:4.0px"></i><i style="left:607.20px;top:8px;width:29.45px;height:40px;background:#f1af03;border-radius:4.0px"></i><i style="left:644.65px;top:8px;width:29.45px;height:40px;background:#fd5240;border-radius:4.0px"></i><i style="left:682.10px;top:8px;width:29.45px;height:40px;background:#fd5240;border-radius:4.0px"></i><i style="left:719.55px;top:8px;width:29.45px;height:40px;background:#fd5240;border-radius:4.0px"></i></div>
<div class="sl" style="left:32px;top:948.5px;width:370px"><svg class="ab" style="left:19.0px;top:9.5px" width="26" height="30" viewBox="0 0 26 30" fill="none" stroke="#a9a8ad" stroke-width="1.9" stroke-linejoin="round" stroke-linecap="round"><path d="M13 1.2 L24.8 8 V22 L13 28.8 L1.2 22 V8 Z M1.4 8.1 L13 15 L24.6 8.1 M13 15 V28.6"/></svg><span style="letter-spacing:0.71px;margin-left:-1.31px;">Configuration Options</span></div>
<div class="pn" style="top:1008px;height:393px"></div>
<div class="cd" style="left:82px;top:1056px;width:520.67px;height:296px"><h3 style="letter-spacing:1.42px;margin-left:-1.64px;">Compact Mode</h3></div>
<div class="mt" style="left:106px;top:1160px;width:472.67px;height:40px"><i style="left:8.00px;top:8px;width:15.23px;height:24px;background:#1bae5c;border-radius:4.0px"></i><i style="left:31.23px;top:8px;width:15.23px;height:24px;background:#1bae5c;border-radius:4.0px"></i><i style="left:54.47px;top:8px;width:15.23px;height:24px;background:#1bae5c;border-radius:4.0px"></i><i style="left:77.70px;top:8px;width:15.23px;height:24px;background:#1bae5c;border-radius:4.0px"></i><i style="left:100.93px;top:8px;width:15.23px;height:24px;background:#1bae5c;border-radius:4.0px"></i><i style="left:124.17px;top:8px;width:15.23px;height:24px;background:#1bae5c;border-radius:4.0px"></i><i style="left:147.40px;top:8px;width:15.23px;height:24px;background:#1bae5c;border-radius:4.0px"></i><i style="left:170.63px;top:8px;width:15.23px;height:24px;background:#1bae5c;border-radius:4.0px"></i><i style="left:193.87px;top:8px;width:15.23px;height:24px;background:#1bae5c;border-radius:4.0px"></i><i style="left:217.10px;top:8px;width:15.23px;height:24px;background:#1bae5c;border-radius:4.0px"></i><i style="left:240.33px;top:8px;width:15.23px;height:24px;background:#1bae5c;border-radius:4.0px"></i><i style="left:263.57px;top:8px;width:15.23px;height:24px;background:#1bae5c;border-radius:4.0px"></i><i style="left:286.80px;top:8px;width:15.23px;height:24px;background:#1bae5c;border-radius:4.0px"></i><i style="left:310.04px;top:8px;width:15.23px;height:24px;background:#f1af03;border-radius:4.0px"></i><i style="left:333.27px;top:27px;width:15.23px;height:5px;background:#e5e4e8;border-radius:3.0px"></i><i style="left:356.50px;top:27px;width:15.23px;height:5px;background:#e5e4e8;border-radius:3.0px"></i><i style="left:379.74px;top:27px;width:15.23px;height:5px;background:#e5e4e8;border-radius:3.0px"></i><i style="left:402.97px;top:27px;width:15.23px;height:5px;background:#e5e4e8;border-radius:3.0px"></i><i style="left:426.20px;top:27px;width:15.23px;height:5px;background:#e5e4e8;border-radius:3.0px"></i><i style="left:449.44px;top:27px;width:15.23px;height:5px;background:#e5e4e8;border-radius:3.0px"></i></div>
<div class="nt" style="left:107.20000000000005px;top:1217px;letter-spacing:0.47px;margin-left:-2.19px;">No header, minimal height</div>
<div class="cd" style="left:650.6700000000001px;top:1056px;width:520.67px;height:296px"><h3 style="letter-spacing:0.94px;margin-left:-2.73px;">High Resolution</h3></div>
<div class="lb" style="left:675.77px;top:1160.5px;letter-spacing:0.86px;margin-left:-2.19px;">High Precision</div>
<div class="vl" style="left:946.54px;width:200px;top:1161px"><span style="display:inline-block;letter-spacing:2.28px;margin-right:-3.12px;">88%</span></div>
<div class="mt" style="left:674.6700000000001px;top:1216px;width:472.67px;height:48px"><i style="left:8.00px;top:8px;width:3.62px;height:32px;background:#1bae5c;border-radius:1.8px"></i><i style="left:19.62px;top:8px;width:3.62px;height:32px;background:#1bae5c;border-radius:1.8px"></i><i style="left:31.23px;top:8px;width:3.62px;height:32px;background:#1bae5c;border-radius:1.8px"></i><i style="left:42.85px;top:8px;width:3.62px;height:32px;background:#1bae5c;border-radius:1.8px"></i><i style="left:54.47px;top:8px;width:3.62px;height:32px;background:#1bae5c;border-radius:1.8px"></i><i style="left:66.08px;top:8px;width:3.62px;height:32px;background:#1bae5c;border-radius:1.8px"></i><i style="left:77.70px;top:8px;width:3.62px;height:32px;background:#1bae5c;border-radius:1.8px"></i><i style="left:89.32px;top:8px;width:3.62px;height:32px;background:#1bae5c;border-radius:1.8px"></i><i style="left:100.93px;top:8px;width:3.62px;height:32px;background:#1bae5c;border-radius:1.8px"></i><i style="left:112.55px;top:8px;width:3.62px;height:32px;background:#1bae5c;border-radius:1.8px"></i><i style="left:124.17px;top:8px;width:3.62px;height:32px;background:#1bae5c;border-radius:1.8px"></i><i style="left:135.78px;top:8px;width:3.62px;height:32px;background:#1bae5c;border-radius:1.8px"></i><i style="left:147.40px;top:8px;width:3.62px;height:32px;background:#1bae5c;border-radius:1.8px"></i><i style="left:159.02px;top:8px;width:3.62px;height:32px;background:#1bae5c;border-radius:1.8px"></i><i style="left:170.63px;top:8px;width:3.62px;height:32px;background:#1bae5c;border-radius:1.8px"></i><i style="left:182.25px;top:8px;width:3.62px;height:32px;background:#1bae5c;border-radius:1.8px"></i><i style="left:193.87px;top:8px;width:3.62px;height:32px;background:#1bae5c;border-radius:1.8px"></i><i style="left:205.48px;top:8px;width:3.62px;height:32px;background:#1bae5c;border-radius:1.8px"></i><i style="left:217.10px;top:8px;width:3.62px;height:32px;background:#1bae5c;border-radius:1.8px"></i><i style="left:228.72px;top:8px;width:3.62px;height:32px;background:#1bae5c;border-radius:1.8px"></i><i style="left:240.33px;top:8px;width:3.62px;height:32px;background:#1bae5c;border-radius:1.8px"></i><i style="left:251.95px;top:8px;width:3.62px;height:32px;background:#1bae5c;border-radius:1.8px"></i><i style="left:263.57px;top:8px;width:3.62px;height:32px;background:#1bae5c;border-radius:1.8px"></i><i style="left:275.19px;top:8px;width:3.62px;height:32px;background:#1bae5c;border-radius:1.8px"></i><i style="left:286.80px;top:8px;width:3.62px;height:32px;background:#1bae5c;border-radius:1.8px"></i><i style="left:298.42px;top:8px;width:3.62px;height:32px;background:#f1af03;border-radius:1.8px"></i><i style="left:310.04px;top:8px;width:3.62px;height:32px;background:#f1af03;border-radius:1.8px"></i><i style="left:321.65px;top:8px;width:3.62px;height:32px;background:#f1af03;border-radius:1.8px"></i><i style="left:333.27px;top:8px;width:3.62px;height:32px;background:#f1af03;border-radius:1.8px"></i><i style="left:344.89px;top:8px;width:3.62px;height:32px;background:#f1af03;border-radius:1.8px"></i><i style="left:356.50px;top:8px;width:3.62px;height:32px;background:#f1af03;border-radius:1.8px"></i><i style="left:368.12px;top:8px;width:3.62px;height:32px;background:#f1af03;border-radius:1.8px"></i><i style="left:379.74px;top:8px;width:3.62px;height:32px;background:#f1af03;border-radius:1.8px"></i><i style="left:391.35px;top:8px;width:3.62px;height:32px;background:#fd5240;border-radius:1.8px"></i><i style="left:402.97px;top:8px;width:3.62px;height:32px;background:#fd5240;border-radius:1.8px"></i><i style="left:414.59px;top:33.6px;width:3.62px;height:6.4px;background:#e5e4e8;border-radius:1.8px"></i><i style="left:426.20px;top:33.6px;width:3.62px;height:6.4px;background:#e5e4e8;border-radius:1.8px"></i><i style="left:437.82px;top:33.6px;width:3.62px;height:6.4px;background:#e5e4e8;border-radius:1.8px"></i><i style="left:449.44px;top:33.6px;width:3.62px;height:6.4px;background:#e5e4e8;border-radius:1.8px"></i><i style="left:461.05px;top:33.6px;width:3.62px;height:6.4px;background:#e5e4e8;border-radius:1.8px"></i></div>
<div class="nt" style="left:676.0999999999999px;top:1281px;letter-spacing:0.70px;margin-left:-0.44px;">40 bars for fine detail</div>
<div class="cd" style="left:1219.33px;top:1056px;width:520.67px;height:296px"><h3 style="letter-spacing:0.90px;margin-left:-2.73px;">Low Resolution</h3></div>
<div class="lb" style="left:1244.43px;top:1160.5px;letter-spacing:0.52px;margin-left:-1.31px;">Coarse Display</div>
<div class="vl" style="left:1515.20px;width:200px;top:1161px"><span style="display:inline-block;letter-spacing:2.12px;margin-right:-2.95px;">45%</span></div>
<div class="mt" style="left:1243.33px;top:1216px;width:472.67px;height:64px"><i style="left:8.00px;top:8px;width:50.08px;height:48px;background:#1bae5c;border-radius:4.0px"></i><i style="left:66.08px;top:8px;width:50.08px;height:48px;background:#1bae5c;border-radius:4.0px"></i><i style="left:124.17px;top:8px;width:50.08px;height:48px;background:#1bae5c;border-radius:4.0px"></i><i style="left:182.25px;top:46.4px;width:50.08px;height:9.6px;background:#e5e4e8;border-radius:3.0px"></i><i style="left:240.34px;top:46.4px;width:50.08px;height:9.6px;background:#e5e4e8;border-radius:3.0px"></i><i style="left:298.42px;top:46.4px;width:50.08px;height:9.6px;background:#e5e4e8;border-radius:3.0px"></i><i style="left:356.50px;top:46.4px;width:50.08px;height:9.6px;background:#e5e4e8;border-radius:3.0px"></i><i style="left:414.59px;top:46.4px;width:50.08px;height:9.6px;background:#e5e4e8;border-radius:3.0px"></i></div>
<div class="nt" style="left:1244.3px;top:1297px;letter-spacing:0.71px;margin-left:-0.88px;">8 bars for simplicity</div>
<div class="sl" style="left:32px;top:1434.5px;width:330px"><svg class="ab" style="left:19.0px;top:9.5px" width="26" height="30" viewBox="0 0 26 30" fill="none" stroke="#a9a8ad" stroke-width="1.9" stroke-linejoin="round" stroke-linecap="round"><path d="M13 1.2 L24.8 8 V22 L13 28.8 L1.2 22 V8 Z M1.4 8.1 L13 15 L24.6 8.1 M13 15 V28.6"/></svg><span style="letter-spacing:0.38px;margin-left:-2.19px;">Dashboard Example</span></div>
<div class="pn" style="top:1494px;height:400px"></div>
<div class="cd" style="left:82px;top:1542px;width:1658px;height:300px"><h3 style="letter-spacing:1.02px;margin-left:-1.09px;">System Monitor Dashboard</h3></div>
<div class="lb" style="left:107.10px;top:1662.5px;letter-spacing:0.90px;margin-left:-2.19px;">Memory Usage</div>
<div class="vl" style="left:271.70px;width:200px;top:1663px"><span style="display:inline-block;letter-spacing:1.60px;margin-right:-2.44px;">67%</span></div>
<div class="mt" style="left:106.0px;top:1718px;width:366.5px;height:40px"><i style="left:8.00px;top:8px;width:9.93px;height:24px;background:#1bae5c;border-radius:4.0px"></i><i style="left:25.93px;top:8px;width:9.93px;height:24px;background:#1bae5c;border-radius:4.0px"></i><i style="left:43.85px;top:8px;width:9.93px;height:24px;background:#1bae5c;border-radius:4.0px"></i><i style="left:61.78px;top:8px;width:9.93px;height:24px;background:#1bae5c;border-radius:4.0px"></i><i style="left:79.70px;top:8px;width:9.93px;height:24px;background:#1bae5c;border-radius:4.0px"></i><i style="left:97.62px;top:8px;width:9.93px;height:24px;background:#1bae5c;border-radius:4.0px"></i><i style="left:115.55px;top:8px;width:9.93px;height:24px;background:#1bae5c;border-radius:4.0px"></i><i style="left:133.48px;top:8px;width:9.93px;height:24px;background:#1bae5c;border-radius:4.0px"></i><i style="left:151.40px;top:8px;width:9.93px;height:24px;background:#1bae5c;border-radius:4.0px"></i><i style="left:169.33px;top:8px;width:9.93px;height:24px;background:#1bae5c;border-radius:4.0px"></i><i style="left:187.25px;top:8px;width:9.93px;height:24px;background:#1bae5c;border-radius:4.0px"></i><i style="left:205.18px;top:8px;width:9.93px;height:24px;background:#f1af03;border-radius:4.0px"></i><i style="left:223.10px;top:8px;width:9.93px;height:24px;background:#f1af03;border-radius:4.0px"></i><i style="left:241.03px;top:27.2px;width:9.93px;height:4.8px;background:#e5e4e8;border-radius:3.0px"></i><i style="left:258.95px;top:27.2px;width:9.93px;height:4.8px;background:#e5e4e8;border-radius:3.0px"></i><i style="left:276.88px;top:27.2px;width:9.93px;height:4.8px;background:#e5e4e8;border-radius:3.0px"></i><i style="left:294.80px;top:27.2px;width:9.93px;height:4.8px;background:#e5e4e8;border-radius:3.0px"></i><i style="left:312.73px;top:27.2px;width:9.93px;height:4.8px;background:#e5e4e8;border-radius:3.0px"></i><i style="left:330.65px;top:27.2px;width:9.93px;height:4.8px;background:#e5e4e8;border-radius:3.0px"></i><i style="left:348.57px;top:27.2px;width:9.93px;height:4.8px;background:#e5e4e8;border-radius:3.0px"></i></div>
<div class="lb" style="left:521.60px;top:1662.5px;letter-spacing:0.61px;margin-left:-2.19px;">Disk Usage</div>
<div class="vl" style="left:686.20px;width:200px;top:1663px"><span style="display:inline-block;letter-spacing:1.78px;margin-right:-2.62px;">34%</span></div>
<div class="mt" style="left:520.5px;top:1718px;width:366.5px;height:40px"><i style="left:8.00px;top:8px;width:9.93px;height:24px;background:#1bae5c;border-radius:4.0px"></i><i style="left:25.93px;top:8px;width:9.93px;height:24px;background:#1bae5c;border-radius:4.0px"></i><i style="left:43.85px;top:8px;width:9.93px;height:24px;background:#1bae5c;border-radius:4.0px"></i><i style="left:61.78px;top:8px;width:9.93px;height:24px;background:#1bae5c;border-radius:4.0px"></i><i style="left:79.70px;top:8px;width:9.93px;height:24px;background:#1bae5c;border-radius:4.0px"></i><i style="left:97.62px;top:8px;width:9.93px;height:24px;background:#1bae5c;border-radius:4.0px"></i><i style="left:115.55px;top:27.2px;width:9.93px;height:4.8px;background:#e5e4e8;border-radius:3.0px"></i><i style="left:133.48px;top:27.2px;width:9.93px;height:4.8px;background:#e5e4e8;border-radius:3.0px"></i><i style="left:151.40px;top:27.2px;width:9.93px;height:4.8px;background:#e5e4e8;border-radius:3.0px"></i><i style="left:169.33px;top:27.2px;width:9.93px;height:4.8px;background:#e5e4e8;border-radius:3.0px"></i><i style="left:187.25px;top:27.2px;width:9.93px;height:4.8px;background:#e5e4e8;border-radius:3.0px"></i><i style="left:205.18px;top:27.2px;width:9.93px;height:4.8px;background:#e5e4e8;border-radius:3.0px"></i><i style="left:223.10px;top:27.2px;width:9.93px;height:4.8px;background:#e5e4e8;border-radius:3.0px"></i><i style="left:241.03px;top:27.2px;width:9.93px;height:4.8px;background:#e5e4e8;border-radius:3.0px"></i><i style="left:258.95px;top:27.2px;width:9.93px;height:4.8px;background:#e5e4e8;border-radius:3.0px"></i><i style="left:276.88px;top:27.2px;width:9.93px;height:4.8px;background:#e5e4e8;border-radius:3.0px"></i><i style="left:294.80px;top:27.2px;width:9.93px;height:4.8px;background:#e5e4e8;border-radius:3.0px"></i><i style="left:312.73px;top:27.2px;width:9.93px;height:4.8px;background:#e5e4e8;border-radius:3.0px"></i><i style="left:330.65px;top:27.2px;width:9.93px;height:4.8px;background:#e5e4e8;border-radius:3.0px"></i><i style="left:348.57px;top:27.2px;width:9.93px;height:4.8px;background:#e5e4e8;border-radius:3.0px"></i></div>
<div class="lb" style="left:936.10px;top:1662.5px;letter-spacing:1.33px;margin-left:-2.19px;">Network</div>
<div class="vl" style="left:1100.70px;width:200px;top:1663px"><span style="display:inline-block;letter-spacing:2.33px;margin-right:-3.17px;">89%</span></div>
<div class="mt" style="left:935.0px;top:1718px;width:366.5px;height:40px"><i style="left:8.00px;top:8px;width:9.93px;height:24px;background:#1bae5c;border-radius:4.0px"></i><i style="left:25.93px;top:8px;width:9.93px;height:24px;background:#1bae5c;border-radius:4.0px"></i><i style="left:43.85px;top:8px;width:9.93px;height:24px;background:#1bae5c;border-radius:4.0px"></i><i style="left:61.78px;top:8px;width:9.93px;height:24px;background:#1bae5c;border-radius:4.0px"></i><i style="left:79.70px;top:8px;width:9.93px;height:24px;background:#1bae5c;border-radius:4.0px"></i><i style="left:97.62px;top:8px;width:9.93px;height:24px;background:#1bae5c;border-radius:4.0px"></i><i style="left:115.55px;top:8px;width:9.93px;height:24px;background:#1bae5c;border-radius:4.0px"></i><i style="left:133.48px;top:8px;width:9.93px;height:24px;background:#1bae5c;border-radius:4.0px"></i><i style="left:151.40px;top:8px;width:9.93px;height:24px;background:#1bae5c;border-radius:4.0px"></i><i style="left:169.33px;top:8px;width:9.93px;height:24px;background:#1bae5c;border-radius:4.0px"></i><i style="left:187.25px;top:8px;width:9.93px;height:24px;background:#1bae5c;border-radius:4.0px"></i><i style="left:205.18px;top:8px;width:9.93px;height:24px;background:#f1af03;border-radius:4.0px"></i><i style="left:223.10px;top:8px;width:9.93px;height:24px;background:#f1af03;border-radius:4.0px"></i><i style="left:241.03px;top:8px;width:9.93px;height:24px;background:#f1af03;border-radius:4.0px"></i><i style="left:258.95px;top:8px;width:9.93px;height:24px;background:#f1af03;border-radius:4.0px"></i><i style="left:276.88px;top:8px;width:9.93px;height:24px;background:#f1af03;border-radius:4.0px"></i><i style="left:294.80px;top:8px;width:9.93px;height:24px;background:#ff7410;border-radius:4.0px"></i><i style="left:312.73px;top:27.2px;width:9.93px;height:4.8px;background:#e5e4e8;border-radius:3.0px"></i><i style="left:330.65px;top:27.2px;width:9.93px;height:4.8px;background:#e5e4e8;border-radius:3.0px"></i><i style="left:348.57px;top:27.2px;width:9.93px;height:4.8px;background:#e5e4e8;border-radius:3.0px"></i></div>
<div class="lb" style="left:1350.60px;top:1662.5px;letter-spacing:0.16px;margin-left:-1.31px;">GPU Usage</div>
<div class="vl" style="left:1515.20px;width:200px;top:1663px"><span style="display:inline-block;letter-spacing:0.02px;margin-right:-0.86px;">12%</span></div>
<div class="mt" style="left:1349.5px;top:1718px;width:366.5px;height:40px"><i style="left:8.00px;top:8px;width:9.93px;height:24px;background:#1bae5c;border-radius:4.0px"></i><i style="left:25.93px;top:8px;width:9.93px;height:24px;background:#1bae5c;border-radius:4.0px"></i><i style="left:43.85px;top:27.2px;width:9.93px;height:4.8px;background:#e5e4e8;border-radius:3.0px"></i><i style="left:61.78px;top:27.2px;width:9.93px;height:4.8px;background:#e5e4e8;border-radius:3.0px"></i><i style="left:79.70px;top:27.2px;width:9.93px;height:4.8px;background:#e5e4e8;border-radius:3.0px"></i><i style="left:97.62px;top:27.2px;width:9.93px;height:4.8px;background:#e5e4e8;border-radius:3.0px"></i><i style="left:115.55px;top:27.2px;width:9.93px;height:4.8px;background:#e5e4e8;border-radius:3.0px"></i><i style="left:133.48px;top:27.2px;width:9.93px;height:4.8px;background:#e5e4e8;border-radius:3.0px"></i><i style="left:151.40px;top:27.2px;width:9.93px;height:4.8px;background:#e5e4e8;border-radius:3.0px"></i><i style="left:169.33px;top:27.2px;width:9.93px;height:4.8px;background:#e5e4e8;border-radius:3.0px"></i><i style="left:187.25px;top:27.2px;width:9.93px;height:4.8px;background:#e5e4e8;border-radius:3.0px"></i><i style="left:205.18px;top:27.2px;width:9.93px;height:4.8px;background:#e5e4e8;border-radius:3.0px"></i><i style="left:223.10px;top:27.2px;width:9.93px;height:4.8px;background:#e5e4e8;border-radius:3.0px"></i><i style="left:241.03px;top:27.2px;width:9.93px;height:4.8px;background:#e5e4e8;border-radius:3.0px"></i><i style="left:258.95px;top:27.2px;width:9.93px;height:4.8px;background:#e5e4e8;border-radius:3.0px"></i><i style="left:276.88px;top:27.2px;width:9.93px;height:4.8px;background:#e5e4e8;border-radius:3.0px"></i><i style="left:294.80px;top:27.2px;width:9.93px;height:4.8px;background:#e5e4e8;border-radius:3.0px"></i><i style="left:312.73px;top:27.2px;width:9.93px;height:4.8px;background:#e5e4e8;border-radius:3.0px"></i><i style="left:330.65px;top:27.2px;width:9.93px;height:4.8px;background:#e5e4e8;border-radius:3.0px"></i><i style="left:348.57px;top:27.2px;width:9.93px;height:4.8px;background:#e5e4e8;border-radius:3.0px"></i></div>
</div>
<div id="panel">
<div class="ab" style="left:0;top:78px;width:697px;height:2px;background:#efedf1"></div>
<div class="tab" style="left:32.600px;color:#6f6e75;letter-spacing:0.90px;margin-left:-1.31px;">Controls</div>
<div class="ab" style="left:0;top:74px;width:174px;height:4px;background:#737076"></div>
<div class="tab" style="left:206.500px;letter-spacing:1.19px;margin-left:-2.19px;">Docs</div>
<div class="tab" style="left:336.600px;letter-spacing:0.33px;margin-left:-2.19px;">Events</div>
<div class="ab" style="left:17px;top:89px;width:520px;height:54px;border:2px solid #b9b8bd;border-radius:9px;font-size:28px;line-height:50px;padding-left:16px;color:#0a0a0a;white-space:nowrap"><span style="display:inline-block;letter-spacing:0.73px;margin-left:-2.19px;">Initial state</span></div>
<svg class="ab" style="left:492px;top:102px" width="22" height="28" viewBox="0 0 22 28" fill="none" stroke="#0a0a0a" stroke-width="2.1"><path d="M5.300 9.500L11 3.700l5.700 5.800M5.300 18.500L11 24.300l5.700-5.800"/></svg>
<svg class="ab" style="left:555.2px;top:102px" width="28" height="28" viewBox="0 0 28 28" fill="none" stroke="#b9b8bd" stroke-width="2"><path d="M3 3h17l5 5v17H3Z M8 3v7h10V3 M7 25v-9h14v9" stroke-linejoin="round"/></svg>
<svg class="ab" style="left:602px;top:101px" width="30" height="30" viewBox="0 0 30 30" fill="none" stroke="#7b7a80" stroke-width="2"><circle cx="15" cy="15" r="13"/><path d="M15 7.200v15.600M7.200 15h15.600"/></svg>
<svg class="ab" style="left:649px;top:101px" width="32" height="30" viewBox="0 0 32 30" fill="none" stroke="#77767c" stroke-width="2" stroke-linecap="round" stroke-linejoin="round"><path d="M7.200 23.500V15A11 11 0 1 1 18.800 26"/><path d="M1.700 18.300l5.500 5.500 5.500-5.500"/></svg>
<div class="ab" style="left:0;top:152px;width:697px;height:2px;background:#f1eff3"></div>
<div class="ab" style="left:32px;top:170px;width:633px;height:80px;border-radius:17px;background:linear-gradient(90deg,#ff9ec4 0%,#ffa08f 9%,#ffa866 13%,#ffab00 17%,#ffc000 24%,#c8d10f 33%,#86d97a 40%,#00d5b0 45.500%,#00d8e6 53%,#00d4ff 58%,#00c4ff 66.500%,#6fcaff 69%,#b9c0ff 78%,#e9b8ff 84%,#ffb0fb 90%,#ffa4e6 96%,#ff9ed0 100%)"></div>
<div class="ab" style="left:415px;top:162px;width:8px;height:96px;border-radius:4px;background:#29282c"></div>
<div class="ab" style="left:32px;top:266px;width:633px;height:48px;border-radius:17px;background:#e8e6ea;text-align:center;font-size:24px;line-height:48px;color:#3f3f46;letter-spacing:0.69px;">Reset to Default</div>
<div class="ab" style="left:0;top:330px;width:697px;height:2px;background:#f1eff3"></div>
<svg class="ab" style="left:22px;top:370px" width="20" height="30" viewBox="0 0 20 30" fill="none" stroke="#85848a" stroke-width="2" stroke-linejoin="round"><path d="M6 2h10.500l-3.500 9h5.500L4.500 28l3-12H2.500Z"/></svg>
<div class="ab mono" style="left:56px;top:365px;font-size:28px;line-height:40px;color:#0a0a0a;white-space:nowrap;-webkit-text-stroke:.4px currentColor"><span style="color:#b4b2b8">&lt;</span>LevelMeter<span style="color:#b4b2b8">&gt;</span></div>

<div class="pl" style="top:432px;letter-spacing:0.90px;margin-left:-1.75px;">level</div>
<div class="in" style="top:430px"><span style="display:inline-block;"></span></div>
<svg class="ab" style="left:648px;top:445px" width="34" height="32" viewBox="0 0 34 32" fill="none" stroke="#c3c2c7" stroke-width="1.800" stroke-linejoin="round" stroke-linecap="butt"><path d="M19.300 2.300L28.500 11.300 17.400 22.500Q16.500 23.400 15.300 23.400H10.100Q8.900 23.400 8 22.500L4.100 18.500Q3 17.300 4.100 16.200Z M11.600 10.300L21.300 19.700"/><path d="M8.100 28H30.900"/></svg>
<div class="pl" style="top:510px;letter-spacing:2.05px;margin-left:-1.75px;">min</div>
<div class="in" style="top:508px"><span style="display:inline-block;letter-spacing:0.00px;margin-left:-0.88px;">0</span></div>
<svg class="ab" style="left:648px;top:523px" width="34" height="32" viewBox="0 0 34 32" fill="none" stroke="#c3c2c7" stroke-width="1.800" stroke-linejoin="round" stroke-linecap="butt"><path d="M19.300 2.300L28.500 11.300 17.400 22.500Q16.500 23.400 15.300 23.400H10.100Q8.900 23.400 8 22.500L4.100 18.500Q3 17.300 4.100 16.200Z M11.600 10.300L21.300 19.700"/><path d="M8.100 28H30.900"/></svg>
<div class="pl" style="top:588px;letter-spacing:0.78px;margin-left:-1.75px;">max</div>
<div class="in" style="top:586px"><span style="display:inline-block;letter-spacing:0.52px;margin-left:-1.75px;">100</span></div>
<svg class="ab" style="left:648px;top:601px" width="34" height="32" viewBox="0 0 34 32" fill="none" stroke="#c3c2c7" stroke-width="1.800" stroke-linejoin="round" stroke-linecap="butt"><path d="M19.300 2.300L28.500 11.300 17.400 22.500Q16.500 23.400 15.300 23.400H10.100Q8.900 23.400 8 22.500L4.100 18.500Q3 17.300 4.100 16.200Z M11.600 10.300L21.300 19.700"/><path d="M8.100 28H30.900"/></svg>
<div class="pl" style="top:666px;letter-spacing:0.55px;margin-left:-1.75px;">numBars</div>
<div class="in" style="top:664px"><span style="display:inline-block;letter-spacing:2.37px;margin-left:-1.31px;">20</span></div>
<svg class="ab" style="left:648px;top:679px" width="34" height="32" viewBox="0 0 34 32" fill="none" stroke="#c3c2c7" stroke-width="1.800" stroke-linejoin="round" stroke-linecap="butt"><path d="M19.300 2.300L28.500 11.300 17.400 22.500Q16.500 23.400 15.300 23.400H10.100Q8.900 23.400 8 22.500L4.100 18.500Q3 17.300 4.100 16.200Z M11.600 10.300L21.300 19.700"/><path d="M8.100 28H30.900"/></svg>
<div class="pl" style="top:744px;letter-spacing:1.03px;margin-left:-1.75px;">label</div>
<div class="in" style="top:742px"><span style="display:inline-block;letter-spacing:0.57px;margin-left:-2.19px;">Level</span></div>
<svg class="ab" style="left:648px;top:757px" width="34" height="32" viewBox="0 0 34 32" fill="none" stroke="#c3c2c7" stroke-width="1.800" stroke-linejoin="round" stroke-linecap="butt"><path d="M19.300 2.300L28.500 11.300 17.400 22.500Q16.500 23.400 15.300 23.400H10.100Q8.900 23.400 8 22.500L4.100 18.500Q3 17.300 4.100 16.200Z M11.600 10.300L21.300 19.700"/><path d="M8.100 28H30.900"/></svg>
<div class="pl" style="top:822px;letter-spacing:1.34px;margin-left:-1.75px;">unit</div>
<div class="in" style="top:820px"><span style="display:inline-block;letter-spacing:0.00px;margin-left:-0.88px;">%</span></div>
<svg class="ab" style="left:648px;top:835px" width="34" height="32" viewBox="0 0 34 32" fill="none" stroke="#c3c2c7" stroke-width="1.800" stroke-linejoin="round" stroke-linecap="butt"><path d="M19.300 2.300L28.500 11.300 17.400 22.500Q16.500 23.400 15.300 23.400H10.100Q8.900 23.400 8 22.500L4.100 18.500Q3 17.300 4.100 16.200Z M11.600 10.300L21.300 19.700"/><path d="M8.100 28H30.900"/></svg>
<div class="pl" style="top:900px;letter-spacing:1.11px;margin-left:-1.75px;">height</div>
<div class="in" style="top:898px"><span style="display:inline-block;letter-spacing:2.37px;margin-left:-1.31px;">24</span></div>
<svg class="ab" style="left:648px;top:913px" width="34" height="32" viewBox="0 0 34 32" fill="none" stroke="#c3c2c7" stroke-width="1.800" stroke-linejoin="round" stroke-linecap="butt"><path d="M19.300 2.300L28.500 11.300 17.400 22.500Q16.500 23.400 15.300 23.400H10.100Q8.900 23.400 8 22.500L4.100 18.500Q3 17.300 4.100 16.200Z M11.600 10.300L21.300 19.700"/><path d="M8.100 28H30.900"/></svg>
<div class="pl" style="top:976px;letter-spacing:0.45px;margin-left:-0.44px;">showHeader</div>
<div class="ab" style="left:256px;top:989px;width:32px;height:32px;border:2px solid #c9c8cd;border-radius:8px;background:#fff"></div>
<svg class="ab" style="left:648px;top:989px" width="34" height="32" viewBox="0 0 34 32" fill="none" stroke="#c3c2c7" stroke-width="1.800" stroke-linejoin="round" stroke-linecap="butt"><path d="M19.300 2.300L28.500 11.300 17.400 22.500Q16.500 23.400 15.300 23.400H10.100Q8.900 23.400 8 22.500L4.100 18.500Q3 17.300 4.100 16.200Z M11.600 10.300L21.300 19.700"/><path d="M8.100 28H30.900"/></svg>
<div class="pl" style="top:1052px;letter-spacing:0.57px;margin-left:-0.88px;">animationSpeed</div>
<div class="in" style="top:1050px"><span style="display:inline-block;letter-spacing:1.90px;margin-left:-1.31px;">75</span></div>
<svg class="ab" style="left:648px;top:1065px" width="34" height="32" viewBox="0 0 34 32" fill="none" stroke="#c3c2c7" stroke-width="1.800" stroke-linejoin="round" stroke-linecap="butt"><path d="M19.300 2.300L28.500 11.300 17.400 22.500Q16.500 23.400 15.300 23.400H10.100Q8.900 23.400 8 22.500L4.100 18.500Q3 17.300 4.100 16.200Z M11.600 10.300L21.300 19.700"/><path d="M8.100 28H30.900"/></svg>
<div class="ab" style="left:0;top:1125px;width:697px;height:619px;background:#fbfafc"></div>
<div class="ab" style="left:0;top:1125px;width:697px;height:2px;background:#f1eff3"></div>
<div class="ab" style="left:0;top:1205px;width:697px;height:2px;background:#f1eff3"></div>
<div class="ab" style="left:32.600px;top:1147px;font-size:28px;line-height:40px;letter-spacing:0.60px;margin-left:-0.88px;color:#0a0a0a;white-space:nowrap">Source</div>
<div class="ab" style="left:403px;top:1143px;width:164px;height:46px;border-radius:13px 0 0 13px;background:#eceaf0"></div>
<div class="ab" style="left:569px;top:1143px;width:48px;height:46px;border-radius:0 13px 13px 0;background:#f3f2f6"></div>
<svg class="ab" style="left:416.500px;top:1151px" width="21.500" height="30" viewBox="0 0 20 30" preserveAspectRatio="none" fill="none" stroke="#4b4a50" stroke-width="2" stroke-linejoin="round"><path d="M6 2h10.500l-3.500 9h5.500L4.500 28l3-12H2.500Z"/></svg>
<div class="ab" style="left:452.400px;top:1147px;font-size:28px;line-height:40px;letter-spacing:0.60px;margin-left:-2.19px;color:#4b4a50;white-space:nowrap">Dynamic</div>
<svg class="ab" style="left:582px;top:1151px" width="23" height="31" viewBox="0 0 23 31" fill="none" stroke="#434248" stroke-width="2.200" stroke-linejoin="round"><path d="M2.100 3.100Q2.100 2.100 3.100 2.100H12.400L20.200 10.200V27Q20.200 28.900 18.300 28.900H4Q2.100 28.900 2.100 27Z M12.200 2.300V10.400H20 M6.800 15H16.200 M6.800 21.900H16.200"/></svg>
<svg class="ab" style="left:635px;top:1150px" width="28" height="32" viewBox="0 0 28 32" fill="none" stroke="#77767c" stroke-width="2" stroke-linejoin="round"><path d="M2.900 17.300V3H17.800" stroke-linejoin="miter"/><path d="M8 9.200Q8 8.200 9 8.200H16.500L25.500 17.200V27.500Q25.500 29.400 23.600 29.400H9.900Q8 29.400 8 27.500Z M16.300 8.400V17.400H25.300"/></svg>

<pre><span>&lt;</span><span class="g">div</span> <span class="p">class</span>=<span class="s">"p-2 space-y-6"</span>&gt;
  &lt;<span class="g">div</span> <span class="p">class</span>=<span class="s">"grid grid-cols-1 gap-6 md:grid-cols-2"</span>&gt;
    &lt;<span class="g">div</span> <span class="p">class</span>=<span class="s">"rounded-xl bg-white px-3 py-2 shadow-md"</span>&gt;
      &lt;<span class="g">h3</span> <span class="p">class</span>=<span class="s">"mb-4 text-lg text-neutral-700"</span>&gt;
         Temperature Monitor
      &lt;/<span class="g">h3</span>&gt;
      &lt;<span class="r">LevelMeter</span>
        <span class="p">:level</span>=<span class="s">"65"</span>
        <span class="p">:min</span>=<span class="s">"0"</span>
        <span class="p">:max</span>=<span class="s">"100"</span>
        <span class="p">label</span>=<span class="s">"CPU Temperature"</span>
        <span class="p">unit</span>=<span class="s">"°C"</span>
        <span class="p">:height</span>=<span class="s">"32"</span></pre>
</div>
<div class="ab" style="left:3252px;top:1722px;width:22px;height:22px;background:radial-gradient(circle at 0 0,rgba(30,30,48,0) 20.500px,#1e1e30 22px)"></div>
<div class="ab" style="left:0;top:1731px;width:18px;height:13px;background:radial-gradient(ellipse 18px 13px at 18px 0,rgba(30,28,44,0) 88%,#1f1d2e 100%)"></div>
</body></html>
